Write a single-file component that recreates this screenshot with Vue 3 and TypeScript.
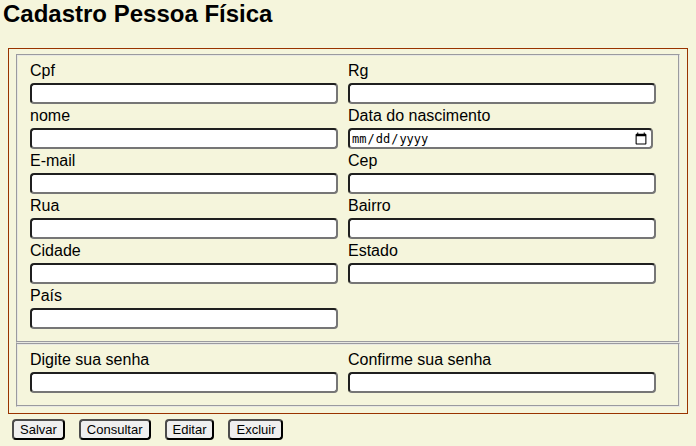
<script setup lang="ts">
import { reactive } from 'vue'

interface Field {
  id: string
  label: string
  type: string
}

const dados: Field[] = [
  { id: 'cpf', label: 'Cpf', type: 'text' },
  { id: 'rg', label: 'Rg', type: 'text' },
  { id: 'nome', label: 'nome', type: 'text' },
  { id: 'nascimento', label: 'Data do nascimento', type: 'date' },
  { id: 'email', label: 'E-mail', type: 'email' },
  { id: 'cep', label: 'Cep', type: 'text' },
  { id: 'rua', label: 'Rua', type: 'text' },
  { id: 'bairro', label: 'Bairro', type: 'text' },
  { id: 'cidade', label: 'Cidade', type: 'text' },
  { id: 'estado', label: 'Estado', type: 'text' },
  { id: 'pais', label: 'País', type: 'text' },
]

const senhas: Field[] = [
  { id: 'senha', label: 'Digite sua senha', type: 'password' },
  { id: 'confirma', label: 'Confirme sua senha', type: 'password' },
]

const grupos: Field[][] = [dados, senhas]
const acoes: string[] = ['Salvar', 'Consultar', 'Editar', 'Excluir']
const valores = reactive<Record<string, string>>({})
</script>

<template>
  <main class="page">
    <h1 class="title">Cadastro Pessoa Física</h1>
    <form @submit.prevent>
      <div class="frame">
        <fieldset v-for="(grupo, i) in grupos" :key="i" class="group">
          <div class="grid">
            <div v-for="campo in grupo" :key="campo.id" class="field">
              <label :for="campo.id">{{ campo.label }}</label>
              <input
                :id="campo.id"
                v-model="valores[campo.id]"
                :type="campo.type"
                :class="['input', { date: campo.type === 'date' }]"
              />
            </div>
          </div>
        </fieldset>
      </div>
      <div class="actions">
        <button v-for="acao in acoes" :key="acao" type="button" class="button">{{ acao }}</button>
      </div>
    </form>
  </main>
</template>

<style>
body {
  background: #f5f5dc;
}
</style>

<style scoped>
.page {
  color: #000;
  font-family: Arial, "Liberation Sans", sans-serif;
  font-size: 16px;
  line-height: 20px;
}

.title {
  margin: 0 3px 20px;
  font-size: 24px;
  line-height: 28px;
}

.frame {
  margin: 0 8px;
  padding: 5px 7px 6px;
  border: 1px solid #993300;
}

.group {
  min-width: 0;
  margin: 0;
  padding: 6px 23px 13px 13px;
  border: 1px solid;
  border-color: #9a9a9f #e8e8e2 #e8e8e2 #9a9a9f;
  box-shadow: inset -1px -1px #9a9a9f, inset 1px 1px #e8e8e2;
}

.grid {
  display: grid;
  grid-template-columns: 1fr 1fr;
  gap: 2px 10px;
}

.field {
  display: flex;
  flex-direction: column;
  gap: 2px;
}

.input {
  box-sizing: border-box;
  width: 100%;
  height: 21px;
  padding: 1px 2px;
  border: 2px solid;
  border-color: #1f1f1f #767676 #767676 #1f1f1f;
  border-radius: 4px;
  background: #fff;
  font-family: Arial, "Liberation Sans", sans-serif;
  font-size: 13px;
}

.date {
  width: 99%;
  padding: 0 1px;
  font-family: "DejaVu Sans Mono", monospace;
  font-size: 12px;
}

.date::-webkit-calendar-picker-indicator {
  width: 14px;
  height: 14px;
}

.actions {
  display: flex;
  gap: 14px;
  padding: 5px 12px;
}

.button {
  box-sizing: border-box;
  height: 21px;
  padding: 0 6px;
  border: 2px solid;
  border-color: #4c4c4c #000 #000 #4c4c4c;
  border-radius: 4px;
  background: #efefef;
  color: #000;
  font-family: Arial, "Liberation Sans", sans-serif;
  font-size: 13px;
  line-height: 17px;
}
</style>
